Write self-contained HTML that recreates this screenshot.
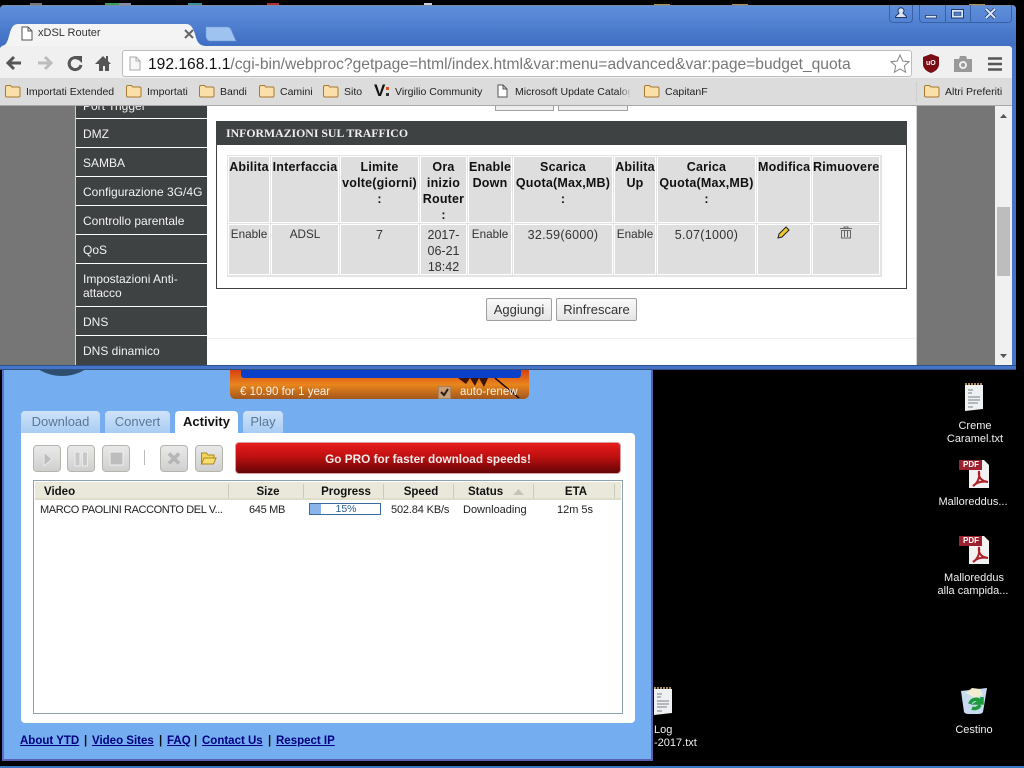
<!DOCTYPE html>
<html><head><meta charset="utf-8"><title>xDSL Router</title>
<style>
html,body{margin:0;padding:0;background:#000;width:1024px;height:768px;overflow:hidden}
body{position:relative;font-family:"Liberation Sans",sans-serif;font-size:12px;color:#111}
div,span.t,svg{position:absolute}
.t{position:absolute;white-space:nowrap;line-height:14px;height:14px}
.c{transform:translateX(-50%)}
.b{font-weight:bold}
.bm{font-size:10.5px;color:#222;top:85px}
.nav{left:76px;width:131px;background:#3f4243;border-bottom:1px solid #fff}
.navt{left:83px;color:#f2f2f2;font-size:12px}
.cell{background:#dedede;box-shadow:0 0 0 1px #fff}
.h{font-weight:bold;font-size:12.5px;color:#111;text-align:center;line-height:16px;left:0;right:0;top:2px;white-space:nowrap;letter-spacing:.2px}
.d{font-size:12.5px;color:#333;text-align:center;line-height:16px;left:0;right:0;top:2px;white-space:nowrap}
.e{font-size:11.7px;top:2px}
.n{letter-spacing:.3px}
.btn{background:linear-gradient(#fafafa,#e4e4e4);border:1px solid #a0a0a0;border-radius:2px;box-sizing:border-box;text-align:center;font-size:13px;line-height:21px;color:#333}
.yt{background:linear-gradient(#cfe3f8,#a9cdf3);border-radius:4px 4px 0 0;top:411px;height:22px;text-align:center;font-size:13px;line-height:22px;color:#56789a}
.tool{top:445px;width:26px;height:25px;border:1px solid #b5b5ad;border-radius:4px;background:linear-gradient(#e9e9e9,#cfcfcf)}
.yh{font-weight:bold;font-size:11.5px;color:#111;top:485px}
.yd{font-size:11px;color:#222;top:503px}
.dv{top:484px;width:1px;height:14px;background:#cbc9b8}
.lk{font-weight:bold;font-size:11.5px;color:#000080;text-decoration:underline;top:734px}
.sep{font-weight:bold;font-size:11.5px;color:#111;top:734px}
.desk{color:#f0f0f0;font-size:11px}
</style></head><body>

<!-- top icon remnants -->
<div style="left:30px;top:3px;width:12px;height:2px;background:#777"></div>
<div style="left:105px;top:3px;width:14px;height:2px;background:#3c9a5a"></div>
<div style="left:119px;top:3px;width:12px;height:2px;background:#8a8aa0"></div>
<div style="left:188px;top:3px;width:14px;height:2px;background:#3a8f9a"></div>
<div style="left:267px;top:3px;width:12px;height:2px;background:#a33"></div>
<div style="left:424px;top:3px;width:8px;height:2px;background:#ccd"></div>
<div style="left:654px;top:4px;width:16px;height:1px;background:#a98f50"></div>
<div style="left:732px;top:4px;width:16px;height:1px;background:#a98f50"></div>
<div style="left:969px;top:4px;width:16px;height:1px;background:#a98f50"></div>

<!-- YTD window -->
<div style="left:2px;top:369px;width:651px;height:392px;background:#74aef0;border-right:2px solid #5a5fb0;border-bottom:2px solid #5a5fb0;border-left:2px solid #5a70c8;box-sizing:border-box"></div>
<div style="left:0;top:766px;width:1024px;height:2px;background:#3b78c4"></div>
<svg style="left:38px;top:369px" width="48" height="8"><path d="M0 0C8 5 16 7 24 7S40 5 48 0z" fill="#2d4e6e"/></svg>
<div style="left:230px;top:369px;width:299px;height:30px;background:linear-gradient(#d43c12,#e9861c 52%,#a4561c);border-radius:0 0 5px 5px"></div>
<div style="left:241px;top:369px;width:280px;height:9px;background:#0a3fc8;border-radius:0 0 3px 3px"></div>
<svg style="left:455px;top:378px" width="74" height="21"><path d="M3 0l8 6 4-6 5 8 4-8 5 9 4-9 6 0z" fill="#3a1608"/><path d="M40 0l24 20" stroke="#1c0c06" stroke-width="1.500"/></svg>
<span class="t" style="left:240px;top:385px;color:#f4efe4;font-size:11.5px">€ 10.90 for 1 year</span>
<div style="left:438px;top:386px;width:13px;height:13px;background:#c8a078;border:1px solid #a9815c;box-sizing:border-box"></div>
<svg style="left:438px;top:386px" width="13" height="13"><path d="M3 6l3 3 4-6" stroke="#2a1a10" stroke-width="2" fill="none"/></svg>
<span class="t" style="left:460px;top:385px;color:#f4efe4;font-size:11.5px">auto-renew</span>

<div class="yt" style="left:21px;width:79px">Download</div>
<div class="yt" style="left:105px;width:65px">Convert</div>
<div class="yt" style="left:175px;width:63px;background:#fff;color:#111;font-weight:bold;height:23px">Activity</div>
<div class="yt" style="left:243px;width:40px">Play</div>
<div style="left:21px;top:433px;width:614px;height:290px;background:#fff;border-radius:0 4px 4px 4px"></div>

<div class="tool" style="left:33px"></div>
<svg style="left:33px;top:445px" width="28" height="27"><path d="M11 7v14l8-7z" fill="#bdbdbd" stroke="#e8e8e8"/></svg>
<div class="tool" style="left:67px"></div>
<svg style="left:67px;top:445px" width="28" height="27"><path d="M8 7h5v14H8zM15.500 7h5v14h-5z" fill="#c8c8c8" stroke="#ececec"/></svg>
<div class="tool" style="left:102px"></div>
<svg style="left:102px;top:445px" width="28" height="27"><path d="M8 7h13v13H8z" fill="#bdbdbd" stroke="#f0f0f0"/></svg>
<div style="left:144px;top:450px;width:1px;height:15px;background:#bbb"></div>
<div class="tool" style="left:160px"></div>
<svg style="left:160px;top:445px" width="28" height="27"><path d="M9 8.500l10 10M19 8.500l-10 10" stroke="#b5b5b5" stroke-width="3.500"/></svg>
<div class="tool" style="left:195px"></div>
<svg style="left:195px;top:445px" width="28" height="27"><path d="M6.500 8h5l1.500 2h6v3H10l-2 6H6.500z" fill="#f4d45c" stroke="#a88a1c"/><path d="M9 13h12l-2.500 6H6.500z" fill="#f9de72" stroke="#a88a1c"/></svg>
<div style="left:235px;top:442px;width:386px;height:32px;border:1px solid #d8a0a0;box-sizing:border-box;border-radius:4px;background:linear-gradient(#e61c1c,#c01010 45%,#650508)"></div>
<span class="t b c" style="left:428px;top:452px;color:#f5eaea;font-size:11.800px">Go PRO for faster download speeds!</span>

<div style="left:33px;top:480px;width:590px;height:234px;border:1px solid #8ea2ad;box-sizing:border-box;background:#fff"></div>
<div style="left:35px;top:482px;width:586px;height:18px;background:#eae8da;border-bottom:2px solid #dedccb;box-sizing:border-box"></div>
<div class="dv" style="left:228px"></div><div class="dv" style="left:303px"></div><div class="dv" style="left:383px"></div><div class="dv" style="left:453px"></div><div class="dv" style="left:533px"></div><div class="dv" style="left:614px"></div>
<span class="t yh" style="left:44px">Video</span>
<span class="t yh c" style="left:268px">Size</span>
<span class="t yh c" style="left:346px">Progress</span>
<span class="t yh c" style="left:421px">Speed</span>
<span class="t yh" style="left:468px">Status</span>
<svg style="left:513px;top:489px" width="11" height="6"><path d="M0 6L5.500 0 11 6z" fill="#c4c4b8"/></svg>
<span class="t yh c" style="left:576px">ETA</span>
<span class="t yd" style="left:40px;letter-spacing:-.4px">MARCO PAOLINI RACCONTO DEL V...</span>
<span class="t yd c" style="left:267px;letter-spacing:-.3px">645 MB</span>
<div style="left:309px;top:503px;width:72px;height:12px;border:1px solid #3c6a9a;box-sizing:border-box;background:#fff"></div>
<div style="left:310px;top:504px;width:11px;height:10px;background:#8ab4ea"></div>
<span class="t c" style="left:346px;top:502px;font-size:10.5px;color:#2a5a90">15%</span>
<span class="t yd" style="left:391px;letter-spacing:-.15px">502.84 KB/s</span>
<span class="t yd" style="left:463px">Downloading</span>
<span class="t yd c" style="left:575px">12m 5s</span>

<span class="t lk" style="left:20px">About YTD</span><span class="t sep" style="left:84px">|</span>
<span class="t lk" style="left:92px">Video Sites</span><span class="t sep" style="left:159px">|</span>
<span class="t lk" style="left:167px">FAQ</span><span class="t sep" style="left:194px">|</span>
<span class="t lk" style="left:202px">Contact Us</span><span class="t sep" style="left:268px">|</span>
<span class="t lk" style="left:276px">Respect IP</span>

<!-- desktop icons -->
<svg style="left:965px;top:383px" width="18" height="28"><path d="M0 2h18v24L0 28z" fill="#eef0f2"/><path d="M0 1h18" stroke="#a98f50" stroke-width="2" stroke-dasharray="2 1"/><path d="M3 7h5M3 10h4M3 14h12M3 17h12M3 20h10M3 24h5" stroke="#7a8088"/></svg>
<span class="t desk c" style="left:975px;top:419px">Creme</span>
<span class="t desk c" style="left:975px;top:432px">Caramel.txt</span>
<svg style="left:959px;top:460px" width="30" height="28"><path d="M10 0h15l5 5v23H10z" fill="#f2f2f2"/><path d="M0 0h23v10H0z" fill="#9c2230"/><path d="M14 26c5-3 7-9 6-15-1 6 2 10 9 11-6-1-11 0-15 4z" fill="none" stroke="#b02028" stroke-width="2"/></svg>
<span class="t" style="left:963px;top:458px;color:#fff;font-size:8px;font-weight:bold">PDF</span>
<span class="t desk c" style="left:973px;top:495px">Malloreddus...</span>
<svg style="left:959px;top:536px" width="30" height="28"><path d="M10 0h15l5 5v23H10z" fill="#f2f2f2"/><path d="M0 0h23v10H0z" fill="#9c2230"/><path d="M14 26c5-3 7-9 6-15-1 6 2 10 9 11-6-1-11 0-15 4z" fill="none" stroke="#b02028" stroke-width="2"/></svg>
<span class="t" style="left:963px;top:534px;color:#fff;font-size:8px;font-weight:bold">PDF</span>
<span class="t desk c" style="left:974px;top:571px">Malloreddus</span>
<span class="t desk c" style="left:973px;top:584px">alla campida...</span>
<svg style="left:654px;top:687px" width="18" height="28"><path d="M0 2h18v24L0 28z" fill="#eef0f2"/><path d="M0 1h18" stroke="#a98f50" stroke-width="2" stroke-dasharray="2 1"/><path d="M3 7h5M3 10h4M3 14h12M3 17h12M3 20h10M3 24h5" stroke="#7a8088"/></svg>
<span class="t desk" style="left:654px;top:723px">Log</span>
<span class="t desk" style="left:654px;top:736px">-2017.txt</span>
<svg style="left:960px;top:686px" width="28" height="29"><path d="M1 5l26-3-4 24q-1 2-5 2H9q-4 0-5-2z" fill="#c8dcf0"/><path d="M6 7l6-5 8 1 3 6-8 3z" fill="#f2ecd0"/><path d="M10 18a6 6 0 0 1 10-3l-3 2h5v-6M20 19a6 6 0 0 1-8 3" fill="none" stroke="#1c9a3c" stroke-width="3.500"/></svg>
<span class="t desk c" style="left:974px;top:723px">Cestino</span>

<!-- Chrome window -->
<div style="left:0;top:5px;width:1016px;height:365px;background:#4575c8;border-radius:4px 4px 0 0"></div>
<div style="left:0;top:5px;width:1016px;height:41px;background:linear-gradient(#5f8fdb,#3f6ec3);border-radius:4px 4px 0 0;border-top:1px solid #7a8aa0;box-sizing:border-box"></div>
<div style="left:0;top:46px;width:1012px;height:34px;background:#f0f0f0;border-radius:3px 3px 0 0"></div>
<div style="left:0;top:78px;width:1012px;height:27px;background:#dcdcdc"></div>
<div style="left:0;top:105px;width:1012px;height:1px;background:#a8a8a8"></div>

<!-- tabs -->
<svg style="left:0;top:22px" width="240" height="25"><path d="M0 24c6 0 7-3 9-10 2-8 4-12 9-12h168c5 0 7 4 9 10 2 8 4 12 12 12z" fill="#f4f4f4"/><path d="M206 5h21c3 0 4 2 5 5l4 9h-26c-2 0-3-1-4-4z" fill="#9ec3f1" stroke="#6f9ad8" stroke-width=".6"/></svg>
<svg style="left:21px;top:26px" width="12" height="15"><path d="M1 1h6l4 4v9H1zM7 1v4h4" fill="#fff" stroke="#555"/></svg>
<span class="t" style="left:38px;top:26px;font-size:11px;color:#333">xDSL Router</span>
<svg style="left:184px;top:29px" width="10" height="10"><path d="M1 1l8 8M9 1L1 9" stroke="#666" stroke-width="2"/></svg>

<!-- window controls -->
<div style="left:889px;top:5px;width:24px;height:18px;border:1px solid #3862a8;border-top:0;border-radius:0 0 4px 4px;box-sizing:border-box"></div>
<div style="left:919px;top:5px;width:93px;height:18px;border:1px solid #3862a8;border-top:0;border-radius:0 0 4px 4px;box-sizing:border-box"></div>
<div style="left:945px;top:5px;width:1px;height:17px;background:#3862a8"></div>
<div style="left:970px;top:5px;width:1px;height:17px;background:#3862a8"></div>
<svg style="left:889px;top:5px" width="124" height="18"><path d="M6.500 12.500c0-3 3.500-3 3.500-4.500a3 3 0 1 1 4 0c0 1.500 3.500 1.500 3.500 4.500z" fill="#d8e6f8" stroke="#21365e"/><path d="M36.500 10.500h11v2.500h-11z" fill="#d8e6f8" stroke="#21365e" stroke-width=".8"/><path d="M62.500 4.500h12v8.500h-12z" fill="#d8e6f8" stroke="#21365e"/><path d="M65 7h7v3.500h-7z" fill="#4f7ecb" stroke="#21365e" stroke-width=".6"/><path d="M97 4l9 9M106 4l-9 9" stroke="#21365e" stroke-width="3.500"/><path d="M97 4l9 9M106 4l-9 9" stroke="#d8e6f8" stroke-width="2"/></svg>

<!-- toolbar -->
<svg style="left:6px;top:55px" width="110" height="18"><path d="M2 8h13M8 2L2 8l6 6" fill="none" stroke="#555" stroke-width="3"/><path d="M32 8h13M39 2l6 6-6 6" fill="none" stroke="#bcbcbc" stroke-width="3"/><path d="M73 4a6 6 0 1 0 2 6" fill="none" stroke="#555" stroke-width="3"/><path d="M68 1l8 0v7z" fill="#555"/><path d="M89 9l8-8 3 3V1h2v5l3 3h-2v7h-4v-5h-2v5h-4V9z" fill="#555"/></svg>
<div style="left:122px;top:50px;width:790px;height:27px;background:#fff;border:1px solid #bdbdbd;border-radius:3px;box-sizing:border-box"></div>
<svg style="left:129px;top:56px" width="12" height="15"><path d="M1 1h6l4 4v9H1zM7 1v4h4" fill="#f6f6f6" stroke="#aaa"/></svg>
<span class="t" style="left:148px;top:55px;height:19px;line-height:19px;font-size:15.600px;color:#777"><span style="color:#111">192.168.1.1</span>/cgi-bin/webproc?getpage=html/index.html&amp;var:menu=advanced&amp;var:page=budget_quota</span>
<svg style="left:890px;top:54px" width="20" height="19"><path d="M10 1l2.700 6 6.300.7-4.700 4.200 1.300 6.300L10 15l-5.600 3.200 1.300-6.300L1 7.700 7.300 7z" fill="#fff" stroke="#888"/></svg>
<svg style="left:922px;top:54px" width="18" height="19"><path d="M9 0l8 3v7q0 6-8 9-8-3-8-9V3z" fill="#7a0c12"/></svg>
<span class="t" style="left:926px;top:57px;color:#fff;font-size:7px;font-weight:bold">uO</span>
<svg style="left:954px;top:56px" width="18" height="16"><path d="M0 3h5l1-3h6l1 3h5v13H0z" fill="#999"/><circle cx="9" cy="9" r="4" fill="#eee"/><circle cx="9" cy="9" r="2" fill="#999"/></svg>
<svg style="left:988px;top:57px" width="14" height="14"><path d="M0 1.500h14M0 7h14M0 12.500h14" stroke="#555" stroke-width="2.500"/></svg>

<!-- bookmarks -->
<svg width="0" height="0"><defs><g id="f"><path d="M.5 3q0-1.500 1.500-1.500h3.500L7 3h6.500q1.500 0 1.500 1.500v7q0 1.500-1.500 1.500H2q-1.500 0-1.500-1.500z" fill="#fbdfa8" stroke="#a77a30"/></g></defs></svg>
<svg style="left:5px;top:84px" width="16" height="14"><use href="#f"/></svg>
<svg style="left:126px;top:84px" width="16" height="14"><use href="#f"/></svg>
<svg style="left:199px;top:84px" width="16" height="14"><use href="#f"/></svg>
<svg style="left:259px;top:84px" width="16" height="14"><use href="#f"/></svg>
<svg style="left:323px;top:84px" width="16" height="14"><use href="#f"/></svg>
<svg style="left:644px;top:84px" width="16" height="14"><use href="#f"/></svg>
<svg style="left:924px;top:84px" width="16" height="14"><use href="#f"/></svg>
<span class="t bm" style="left:26px">Importati Extended</span>
<span class="t bm" style="left:147px">Importati</span>
<span class="t bm" style="left:220px">Bandi</span>
<span class="t bm" style="left:280px">Camini</span>
<span class="t bm" style="left:344px">Sito</span>
<span class="t b" style="left:374px;top:84px;font-size:17px;color:#111">V</span>
<div style="left:386px;top:87px;width:3px;height:3px;background:#d8501c"></div><div style="left:386px;top:93px;width:3px;height:3px;background:#333"></div>
<span class="t bm" style="left:395px">Virgilio Community</span>
<svg style="left:497px;top:84px" width="11" height="14"><path d="M1 1h5l4 4v8H1zM6 1v4h4" fill="#fff" stroke="#555"/></svg>
<span class="t bm" style="left:515px;width:115px;overflow:hidden">Microsoft Update Catalog</span>
<div style="left:618px;top:82px;width:14px;height:20px;background:linear-gradient(90deg,rgba(220,220,220,0),#dcdcdc)"></div>
<span class="t bm" style="left:665px">CapitanF</span>
<div style="left:916px;top:82px;width:1px;height:20px;background:#cfcfcf"></div>
<span class="t bm" style="left:945px">Altri Preferiti</span>

<!-- page -->
<div style="left:0;top:106px;width:1012px;height:259px;background:#fff;overflow:hidden"></div>
<div style="left:0;top:106px;width:75px;height:259px;background:#767676"></div>
<div style="left:75px;top:106px;width:1px;height:259px;background:#c8d0d8"></div>
<div style="left:917px;top:106px;width:78px;height:259px;background:#767676"></div>
<div style="left:916px;top:106px;width:1px;height:259px;background:#d0d0d0"></div>
<div style="left:995px;top:106px;width:17px;height:259px;background:#f0f0f0"></div>
<div style="left:997px;top:207px;width:13px;height:69px;background:#bdbdbd"></div>
<svg style="left:995px;top:110px" width="17" height="252"><path d="M5 8l3.500-4L12 8zM5 244l3.500 4 3.500-4z" fill="#555"/></svg>

<div class="nav" style="top:106px;height:12px;overflow:hidden"></div>
<span class="t navt" style="top:99px;clip-path:inset(7px 0 0 0)">Port Trigger</span>
<div class="nav" style="top:119px;height:28px"></div><span class="t navt" style="top:127px">DMZ</span>
<div class="nav" style="top:148px;height:28px"></div><span class="t navt" style="top:156px">SAMBA</span>
<div class="nav" style="top:177px;height:28px"></div><span class="t navt" style="top:185px">Configurazione 3G/4G</span>
<div class="nav" style="top:206px;height:28px"></div><span class="t navt" style="top:214px">Controllo parentale</span>
<div class="nav" style="top:235px;height:28px"></div><span class="t navt" style="top:243px">QoS</span>
<div class="nav" style="top:264px;height:42px"></div><span class="t navt" style="top:272px">Impostazioni Anti-</span><span class="t navt" style="top:286px">attacco</span>
<div class="nav" style="top:307px;height:28px"></div><span class="t navt" style="top:315px">DNS</span>
<div class="nav" style="top:336px;height:29px;border:0"></div><span class="t navt" style="top:344px">DNS dinamico</span>

<div style="left:495px;top:106px;width:59px;height:5px;background:#eee;border:1px solid #a0a0a0;border-top:0;box-sizing:border-box"></div>
<div style="left:558px;top:106px;width:70px;height:5px;background:#eee;border:1px solid #a0a0a0;border-top:0;box-sizing:border-box"></div>

<div style="left:216px;top:121px;width:691px;height:168px;border:1px solid #3f4243;box-sizing:border-box;background:#fff"></div>
<div style="left:216px;top:121px;width:691px;height:24px;background:#3f4243"></div>
<span class="t b" style="left:226px;top:126px;color:#eee;font-family:'Liberation Serif',serif;font-size:11.800px">INFORMAZIONI SUL TRAFFICO</span>

<div style="left:227px;top:155px;width:655px;height:122px;background:#e4e4e4"></div>
<div class="cell" style="left:229px;top:157px;width:40px;height:65px"><div class="h">Abilita</div></div>
<div class="cell" style="left:272px;top:157px;width:66px;height:65px"><div class="h">Interfaccia</div></div>
<div class="cell" style="left:341px;top:157px;width:77px;height:65px"><div class="h">Limite<br>volte(giorni)<br>:</div></div>
<div class="cell" style="left:421px;top:157px;width:45px;height:65px"><div class="h">Ora<br>inizio<br>Router<br>:</div></div>
<div class="cell" style="left:469px;top:157px;width:42px;height:65px"><div class="h">Enable<br>Down</div></div>
<div class="cell" style="left:514px;top:157px;width:98px;height:65px"><div class="h">Scarica<br>Quota(Max,MB)<br>:</div></div>
<div class="cell" style="left:615px;top:157px;width:40px;height:65px"><div class="h">Abilita<br>Up</div></div>
<div class="cell" style="left:658px;top:157px;width:97px;height:65px"><div class="h">Carica<br>Quota(Max,MB)<br>:</div></div>
<div class="cell" style="left:758px;top:157px;width:52px;height:65px"><div class="h">Modifica</div></div>
<div class="cell" style="left:813px;top:157px;width:66px;height:65px"><div class="h">Rimuovere</div></div>

<div class="cell" style="left:229px;top:225px;width:40px;height:49px"><div class="d e">Enable</div></div>
<div class="cell" style="left:272px;top:225px;width:66px;height:49px"><div class="d e">ADSL</div></div>
<div class="cell" style="left:341px;top:225px;width:77px;height:49px"><div class="d">7</div></div>
<div class="cell" style="left:421px;top:225px;width:45px;height:49px"><div class="d">2017-<br>06-21<br>18:42</div></div>
<div class="cell" style="left:469px;top:225px;width:42px;height:49px"><div class="d e">Enable</div></div>
<div class="cell" style="left:514px;top:225px;width:98px;height:49px"><div class="d n">32.59(6000)</div></div>
<div class="cell" style="left:615px;top:225px;width:40px;height:49px"><div class="d e">Enable</div></div>
<div class="cell" style="left:658px;top:225px;width:97px;height:49px"><div class="d n">5.07(1000)</div></div>
<div class="cell" style="left:758px;top:225px;width:52px;height:49px"></div>
<div class="cell" style="left:813px;top:225px;width:66px;height:49px"></div>
<svg style="left:777px;top:226px" width="14" height="13"><path d="M1 12l1-4 7-7 3 3-7 7z" fill="#f0c828" stroke="#222"/></svg>
<svg style="left:839px;top:226px" width="14" height="13"><path d="M1 2.500h12M5 2.500V1h4v1.500M2.500 4.500h9V12h-9zM5.500 5v6M8.500 5v6" fill="none" stroke="#666"/></svg>

<div class="btn" style="left:486px;top:298px;width:66px;height:23px">Aggiungi</div>
<div class="btn" style="left:556px;top:298px;width:81px;height:23px">Rinfrescare</div>
<div style="left:207px;top:338px;width:709px;height:1px;background:#eee"></div>

<div style="left:0;top:365px;width:1016px;height:1px;background:#2c4f8e"></div>
<div style="left:0;top:369px;width:1016px;height:1px;background:#32507e"></div>
</body></html>
